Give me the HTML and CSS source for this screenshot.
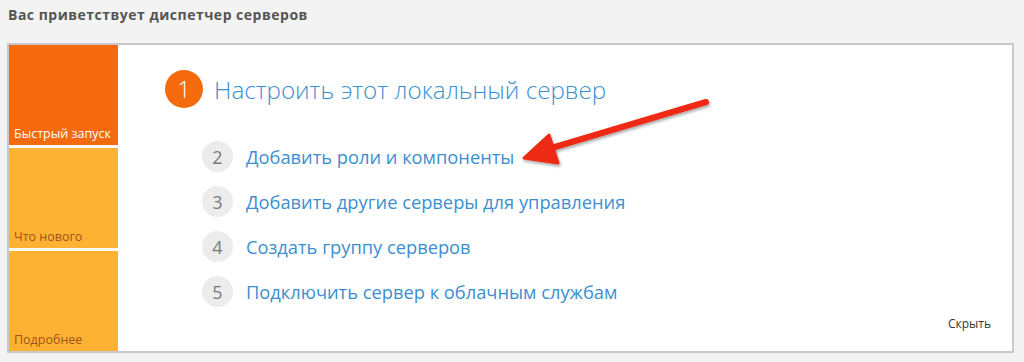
FILE: index.html
```html
<!DOCTYPE html>
<html lang="ru">
<head>
  <meta charset="UTF-8">
  <title>Диспетчер серверов</title>
  <link rel="stylesheet" href="styles.css">
</head>
<body>

<h1 class="title">Вас приветствует диспетчер серверов</h1>

<div class="panel">
  <div class="tiles">
    <div class="tile tile-active">Быстрый запуск</div>
    <div class="tile">Что нового</div>
    <div class="tile">Подробнее</div>
  </div>

  <div class="content">
    <div class="main-step">
      <span class="big-num">1</span>
      <span class="main-text">Настроить этот локальный сервер</span>
    </div>

    <ul class="steps">
      <li><span class="num">2</span><a href="#">Добавить роли и компоненты</a></li>
      <li><span class="num">3</span><a href="#">Добавить другие серверы для управления</a></li>
      <li><span class="num">4</span><a href="#">Создать группу серверов</a></li>
      <li><span class="num">5</span><a href="#">Подключить сервер к облачным службам</a></li>
    </ul>

    <a class="hide-link" href="#">Скрыть</a>

    <svg class="arrow" width="210" height="80" viewBox="0 0 210 80">
      <defs>
        <filter id="shadow" x="-20%" y="-40%" width="140%" height="180%">
          <feDropShadow dx="1" dy="2" stdDeviation="1.5" flood-color="#000" flood-opacity="0.35"/>
        </filter>
      </defs>
      <g filter="url(#shadow)">
        <line x1="188" y1="10" x2="30" y2="57" stroke="#ee2a12" stroke-width="6" stroke-linecap="round"/>
        <polygon points="6,66 31,43 40,71" fill="#ee2a12" stroke="#ee2a12" stroke-width="3" stroke-linejoin="round"/>
      </g>
    </svg>
  </div>
</div>

</body>
</html>
```

FILE: styles.css
```css
body {
  font-family: "Open Sans", "Noto Sans", sans-serif;
  background-color: #f3f3f3;
  margin: 0;
  padding: 0;
}
.title {
  font-size: 14px;
  font-weight: bold;
  letter-spacing: 0.5px;
  color: #555;
  margin: 0;
  padding: 5px 0 0 8px;
  height: 38px;
}
.panel {
  display: flex;
  margin-left: 7px;
  width: 1003px;
  height: 306px;
  background-color: white;
  border: 2px solid #c9c9c9;
}
.tiles {
  display: flex;
  flex-direction: column;
  gap: 3px;
  width: 109px;
}
.tile {
  flex: 1;
  display: flex;
  align-items: flex-end;
  padding: 0 0 3px 5px;
  font-size: 12.5px;
  color: #a0531a;
  background-color: #feb233;
}
.tile-active {
  background-color: #f56a0c;
  color: white;
}
.content {
  position: relative;
  flex: 1;
  padding: 25px 0 0 47px;
}
.main-step {
  display: flex;
  align-items: center;
  gap: 11px;
}
.big-num {
  width: 38px;
  height: 38px;
  border-radius: 50%;
  background-color: #f56a0c;
  color: white;
  font-size: 23px;
  font-weight: 300;
  display: flex;
  align-items: center;
  justify-content: center;
}
.main-text {
  font-size: 24.2px;
  font-weight: 300;
  color: #3b8fd0;
}
.steps {
  list-style: none;
  margin: 33px 0 0 37px;
  padding: 0;
  display: flex;
  flex-direction: column;
  gap: 14px;
}
.steps li {
  display: flex;
  align-items: center;
  gap: 13px;
  height: 31px;
}
.num {
  width: 31px;
  height: 31px;
  border-radius: 50%;
  background-color: #ececec;
  color: #7a7a7a;
  font-size: 18px;
  display: flex;
  align-items: center;
  justify-content: center;
}
.steps a {
  font-size: 18.3px;
  color: #3b8fd0;
  text-decoration: none;
}
.hide-link {
  position: absolute;
  right: 21px;
  bottom: 19px;
  font-size: 12px;
  color: #333;
  text-decoration: none;
}
.arrow {
  position: absolute;
  left: 400px;
  top: 47px;
}
```
